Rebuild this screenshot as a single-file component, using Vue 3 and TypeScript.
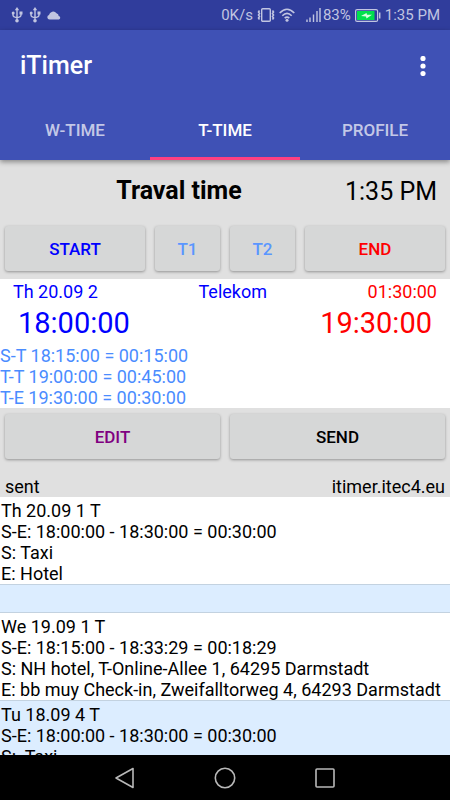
<script setup lang="ts">
import { ref } from 'vue'

interface Entry {
  id: number
  lines: string[]
  tinted: boolean
}

const tabs: string[] = ['W-TIME', 'T-TIME', 'PROFILE']
const activeTab = ref<string>('T-TIME')

const segments: string[] = [
  'S-T 18:15:00 = 00:15:00',
  'T-T 19:00:00 = 00:45:00',
  'T-E 19:30:00 = 00:30:00',
]

const entries: Entry[] = [
  { id: 1, tinted: false, lines: ['Th 20.09 1 T', 'S-E: 18:00:00 - 18:30:00 = 00:30:00', 'S: Taxi', 'E: Hotel'] },
  { id: 2, tinted: true, lines: [] },
  {
    id: 3,
    tinted: false,
    lines: [
      'We 19.09 1 T',
      'S-E: 18:15:00 - 18:33:29 = 00:18:29',
      'S: NH hotel, T-Online-Allee 1, 64295 Darmstadt',
      'E: bb muy Check-in, Zweifalltorweg 4, 64293 Darmstadt',
    ],
  },
  { id: 4, tinted: true, lines: ['Tu 18.09 4 T', 'S-E: 18:00:00 - 18:30:00 = 00:30:00', 'S:  Taxi'] },
]
</script>

<template>
  <div class="screen">
    <div class="status">
      <div class="status-left">
        <svg v-for="n in 2" :key="n" viewBox="0 0 12 16" width="12" height="16">
          <path d="M6 2v12M2 5.500v2.500q0 2 4 2.700M10 5.500v2.500q0 2-4 2.700" fill="none" stroke="currentColor" stroke-width="1.400" />
          <path d="M6 0l2.200 3.200H3.800z" fill="currentColor" />
          <circle cx="6" cy="13.800" r="1.800" fill="currentColor" />
          <circle cx="2.200" cy="6" r="1.500" fill="currentColor" />
          <rect x="8.500" y="4.500" width="3" height="3" fill="currentColor" />
        </svg>
        <svg viewBox="0 0 14 9" width="14" height="9">
          <path d="M2.500 8.500A2.300 2.300 0 0 1 2 4 4.200 4.200 0 0 1 9.500 2.200 3 3 0 0 1 11.700 5 1.800 1.800 0 0 1 12 8.500z" fill="currentColor" />
        </svg>
      </div>
      <div class="status-right">
        <span>0K/s</span>
        <svg class="vibrate" viewBox="0 0 18 14" width="18" height="14">
          <rect x="4.700" y="0.700" width="8.600" height="12.600" rx="1" fill="none" stroke="currentColor" stroke-width="1.400" />
          <path d="M2.500 2.500l-1 1.500 1 1.500-1 1.500 1 1.500-1 1.500 1 1.500M15.500 2.500l1 1.500-1 1.500 1 1.500-1 1.500 1 1.500-1 1.500" fill="none" stroke="currentColor" stroke-width="1.600" />
        </svg>
        <svg class="wifi" viewBox="0 0 16 14" width="16" height="14">
          <path d="M0.700 5Q8-2.500 15.300 5M3.300 7.700Q8 3 12.700 7.700M5.700 10.200Q8 8 10.300 10.200" fill="none" stroke="currentColor" stroke-width="1.600" />
          <circle cx="8" cy="12.300" r="1.500" fill="currentColor" />
        </svg>
        <svg class="signal" viewBox="0 0 15 14" width="15" height="14">
          <path d="M1 11.500V14M4 9.500V14M7.500 6.500V14M11 3V14M14 0V14" fill="none" stroke="currentColor" stroke-width="1.400" />
        </svg>
        <span>83%</span>
        <svg class="battery" viewBox="0 0 26 13" width="26" height="13">
          <rect x="0.600" y="0.600" width="22" height="11.800" rx="1.500" fill="none" stroke="currentColor" stroke-width="1.200" />
          <rect x="2" y="2" width="17.500" height="9" fill="#00e04d" />
          <path d="M24.700 3.500v6" stroke="currentColor" stroke-width="1.500" />
          <path d="M6 7l5.500-3 .5 1.800h5L11.500 9.500 11 7.500z" fill="#d4ffe0" />
        </svg>
        <span>1:35 PM</span>
      </div>
    </div>

    <header class="appbar">
      <div class="toolbar">
        <h1>iTimer</h1>
        <button class="more" type="button" aria-label="More options">
          <svg viewBox="0 0 6 20" width="6" height="20">
            <circle cx="3" cy="2.500" r="2.600" fill="#fff" />
            <circle cx="3" cy="10" r="2.600" fill="#fff" />
            <circle cx="3" cy="17.500" r="2.600" fill="#fff" />
          </svg>
        </button>
      </div>
      <nav class="tabs">
        <button
          v-for="tab in tabs"
          :key="tab"
          type="button"
          class="tab"
          :class="{ active: tab === activeTab }"
          @click="activeTab = tab"
        >
          {{ tab }}
        </button>
      </nav>
    </header>

    <main class="content">
      <section class="panel">
        <div class="heading">
          <h2>Traval time</h2>
          <span class="clock">1:35 PM</span>
        </div>
        <div class="actions four">
          <button type="button" class="btn start">START</button>
          <button type="button" class="btn mid">T1</button>
          <button type="button" class="btn mid">T2</button>
          <button type="button" class="btn end">END</button>
        </div>
      </section>

      <section class="current">
        <div class="meta">
          <span>Th 20.09 2</span>
          <span>Telekom</span>
          <span class="red">01:30:00</span>
        </div>
        <div class="times">
          <span>18:00:00</span>
          <span class="red">19:30:00</span>
        </div>
        <div class="segments">
          <div v-for="segment in segments" :key="segment">{{ segment }}</div>
        </div>
      </section>

      <section class="panel">
        <div class="actions two">
          <button type="button" class="btn edit">EDIT</button>
          <button type="button" class="btn send">SEND</button>
        </div>
        <div class="sync">
          <span>sent</span>
          <span>itimer.itec4.eu</span>
        </div>
      </section>

      <ul class="entries">
        <li v-for="entry in entries" :key="entry.id" class="entry" :class="{ tinted: entry.tinted }">
          <div v-for="line in entry.lines" :key="line" class="line">{{ line }}</div>
        </li>
      </ul>
    </main>

    <div class="navbar">
      <button type="button" aria-label="Back">
        <svg viewBox="0 0 22 22" width="22" height="22">
          <path d="M19 1.500v19L2 11z" fill="none" stroke="#b8b8b8" stroke-width="1.600" stroke-linejoin="round" />
        </svg>
      </button>
      <button type="button" aria-label="Home">
        <svg viewBox="0 0 22 22" width="22" height="22">
          <circle cx="11" cy="11" r="9.700" fill="none" stroke="#b8b8b8" stroke-width="1.600" />
        </svg>
      </button>
      <button type="button" aria-label="Recent apps">
        <svg viewBox="0 0 22 22" width="22" height="22">
          <rect x="2" y="2" width="18" height="18" rx="1" fill="none" stroke="#b8b8b8" stroke-width="1.600" />
        </svg>
      </button>
    </div>
  </div>
</template>

<style>
body {
  margin: 0;
}
</style>

<style scoped>
.screen {
  display: flex;
  flex-direction: column;
  height: 100vh;
  overflow: hidden;
  background: #fff;
  color: #000;
  font-family: Roboto, "Liberation Sans", sans-serif;
  font-size: 18px;
  line-height: 21px;
}

button {
  border: 0;
  margin: 0;
  padding: 0;
  background: none;
  font: inherit;
  color: inherit;
  cursor: pointer;
}

svg {
  display: block;
}

.status {
  display: flex;
  flex: none;
  justify-content: space-between;
  align-items: center;
  height: 30px;
  padding: 0 10px 0 11px;
  background: #303d9c;
  color: #c1c5e1;
  font-size: 15px;
}

.status-left,
.status-right {
  display: flex;
  align-items: center;
}

.status-left {
  gap: 6px;
}

.vibrate,
.wifi {
  margin-left: 4px;
}

.signal {
  margin: 0 2px 0 11px;
}

.battery {
  margin: 0 4px;
}

.appbar {
  position: relative;
  z-index: 1;
  flex: none;
  background: #3f51b5;
  color: #fff;
  box-shadow: 0 2px 5px rgba(0, 0, 0, 0.4);
}

.toolbar {
  display: flex;
  justify-content: space-between;
  align-items: center;
  padding: 21px 15px 19px 20px;
}

h1 {
  margin: 0;
  font-size: 25px;
  font-weight: 500;
  line-height: 30px;
}

.more {
  display: flex;
  justify-content: center;
  width: 24px;
}

.tabs {
  display: grid;
  grid-template-columns: repeat(3, 1fr);
  height: 60px;
}

.tab {
  border-top: 3px solid transparent;
  border-bottom: 3px solid transparent;
  color: rgba(255, 255, 255, 0.7);
  font-size: 17px;
  font-weight: 500;
}

.tab.active {
  border-bottom-color: #ff4081;
  color: #fff;
}

.content {
  display: flex;
  flex: 1;
  flex-direction: column;
  min-height: 0;
  overflow: hidden;
}

.panel {
  flex: none;
  background: #e0e0e0;
}

.heading {
  display: flex;
  align-items: center;
  padding: 16px 13px 14px;
}

h2 {
  flex: 1;
  margin: 0;
  font-size: 25px;
  font-weight: 700;
  line-height: 30px;
  text-align: center;
}

.clock {
  font-size: 25px;
}

.actions {
  display: grid;
  gap: 10px;
  padding: 6px 5px 8px;
}

.four {
  grid-template-columns: 140px 1fr 1fr 140px;
}

.two {
  grid-template-columns: 1fr 1fr;
}

.btn {
  height: 45px;
  padding-top: 1px;
  border-radius: 3px;
  background: #d6d7d7;
  box-shadow: 0 1px 3px rgba(0, 0, 0, 0.35);
  font-size: 17px;
  font-weight: 500;
}

.start {
  color: #00f;
}

.mid {
  color: #5a96ff;
}

.end,
.red {
  color: #f00;
}

.edit {
  color: purple;
}

.current {
  flex: none;
  padding-top: 2px;
  color: #00f;
}

.meta {
  display: flex;
  justify-content: space-between;
  padding: 0 13px;
}

.times {
  display: flex;
  justify-content: space-between;
  padding: 4px 18px;
  font-size: 29px;
  line-height: 35px;
}

.segments {
  color: #4a8cff;
}

.sync {
  display: flex;
  justify-content: space-between;
  padding: 9px 5px 0;
}

.entries {
  flex: none;
  margin: 0;
  padding: 0;
  list-style: none;
}

.entry {
  min-height: 24px;
  padding: 3px 1px 0;
  border-bottom: 1px solid #c3d2e0;
}

.tinted {
  background: #dcedff;
}

.line {
  white-space: pre-wrap;
}

.navbar {
  display: flex;
  flex: none;
  justify-content: center;
  align-items: center;
  gap: 78px;
  height: 45px;
  background: #000;
}
</style>
